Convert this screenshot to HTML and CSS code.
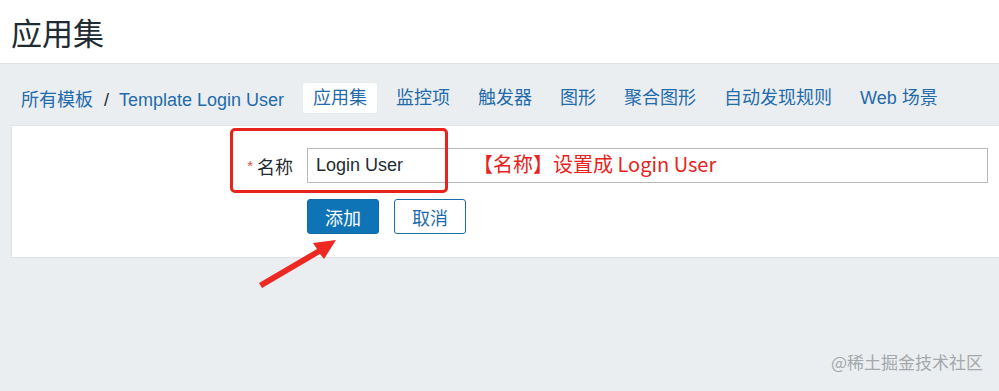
FILE: index.html
```html
<!DOCTYPE html>
<html>
<head>
    <meta charset="utf-8">
    <link rel="stylesheet" href="styles.css">
</head>
<body>
    <div class="header">
        <h1>应用集</h1>
    </div>

    <div class="tabs">
        <div class="breadcrumb">
            <a href="#">所有模板</a><span class="sep">/</span><a href="#">Template Login User</a>
        </div>
        <a class="tab tab-active" href="#">应用集</a>
        <a class="tab" href="#">监控项</a>
        <a class="tab" href="#">触发器</a>
        <a class="tab" href="#">图形</a>
        <a class="tab" href="#">聚合图形</a>
        <a class="tab" href="#">自动发现规则</a>
        <a class="tab" href="#">Web 场景</a>
    </div>

    <div class="panel">
        <div class="form-row">
            <label class="form-label"><span class="required">*</span>名称</label>
            <div class="form-field">
                <input class="input" type="text" value="Login User">
            </div>
        </div>
        <div class="form-row">
            <div class="form-label"></div>
            <div class="form-field actions">
                <button class="btn btn-primary">添加</button>
                <button class="btn btn-secondary">取消</button>
            </div>
        </div>

        <!-- annotations drawn over the screenshot -->
        <div class="mark-box"></div>
        <div class="mark-text">【名称】设置成 Login User</div>
        <svg class="mark-arrow" width="90" height="60" viewBox="0 0 90 60">
            <path d="M3 49 L61 15 L57 9 L80 6 L68 25 L64 20 L6 54 Z" fill="#ec2a22"/>
        </svg>
    </div>

    <div class="watermark">@稀土掘金技术社区</div>
</body>
</html>
```

FILE: styles.css
```css
body {
    margin: 0;
    height: 391px;
    overflow: hidden;
    background: #ebeef0;
    font-family: "Liberation Sans", "Noto Sans CJK SC", sans-serif;
    color: #1f2c33;
    position: relative;
}

a {
    color: #1f6bab;
    text-decoration: none;
}

.header {
    height: 63px;
    background: #ffffff;
    border-bottom: 1px solid #dce0e3;
    display: flex;
    align-items: center;
    padding-left: 11px;
}

.header h1 {
    margin: 0;
    font-size: 31px;
    font-weight: 400;
    font-family: "Noto Sans CJK SC", sans-serif;
    color: #1f2c33;
}

.tabs {
    display: flex;
    align-items: center;
    gap: 8px;
    height: 30px;
    margin: 19px 0 12px 11px;
    font-size: 18px;
}

.breadcrumb {
    padding: 0 10px;
    margin-right: 1px;
    white-space: nowrap;
}

.breadcrumb .sep {
    color: #1f2c33;
    margin: 0 10px 0 11px;
}

.tab {
    padding: 0 10px;
    height: 30px;
    line-height: 30px;
    white-space: nowrap;
}

.tab-active {
    background: #ffffff;
    border-radius: 2px;
    box-shadow: 0 0 1px rgba(0, 0, 0, 0.08);
    margin-right: 1px;
}

.panel {
    position: relative;
    background: #ffffff;
    border: 1px solid #dfe3e6;
    border-right: none;
    margin-left: 11px;
    padding: 22px 0 23px 0;
    display: flex;
    flex-direction: column;
    gap: 16px;
}

.form-row {
    display: flex;
    align-items: center;
}

.form-label {
    width: 295px;
    flex-shrink: 0;
    text-align: right;
    font-size: 18px;
    padding-right: 14px;
    box-sizing: border-box;
}

.required {
    color: #d64e4e;
    font-size: 15px;
    margin-right: 4px;
    vertical-align: 3px;
}

.form-field {
    flex: 1;
    padding-right: 11px;
}

.input {
    width: 100%;
    height: 35px;
    box-sizing: border-box;
    border: 1px solid #b7bbbe;
    padding: 0 8px;
    font-size: 18px;
    font-family: "Liberation Sans", "Noto Sans CJK SC", sans-serif;
    color: #1f2c33;
    outline: none;
}

.actions {
    display: flex;
    gap: 15px;
}

.btn {
    width: 72px;
    height: 35px;
    border-radius: 3px;
    font-size: 18px;
    font-family: "Noto Sans CJK SC", sans-serif;
    cursor: pointer;
    padding: 0;
}

.btn-primary {
    background: #0f74b5;
    border: 1px solid #0f6ca8;
    color: #ffffff;
}

.btn-secondary {
    background: #ffffff;
    border: 1px solid #1b6ea8;
    color: #1f6bab;
}

.mark-box {
    position: absolute;
    left: 218px;
    top: 2px;
    width: 212px;
    height: 59px;
    border: 3px solid #e8221c;
    border-radius: 5px;
}

.mark-text {
    position: absolute;
    left: 461px;
    top: 23px;
    font-size: 20px;
    color: #e8231d;
    font-family: "Noto Sans CJK SC", sans-serif;
    white-space: nowrap;
}

.mark-arrow {
    position: absolute;
    left: 244px;
    top: 108px;
}

.watermark {
    position: absolute;
    right: 16px;
    bottom: 17px;
    font-size: 17px;
    color: #a4a8ac;
    font-family: "Noto Sans CJK SC", sans-serif;
}
```
